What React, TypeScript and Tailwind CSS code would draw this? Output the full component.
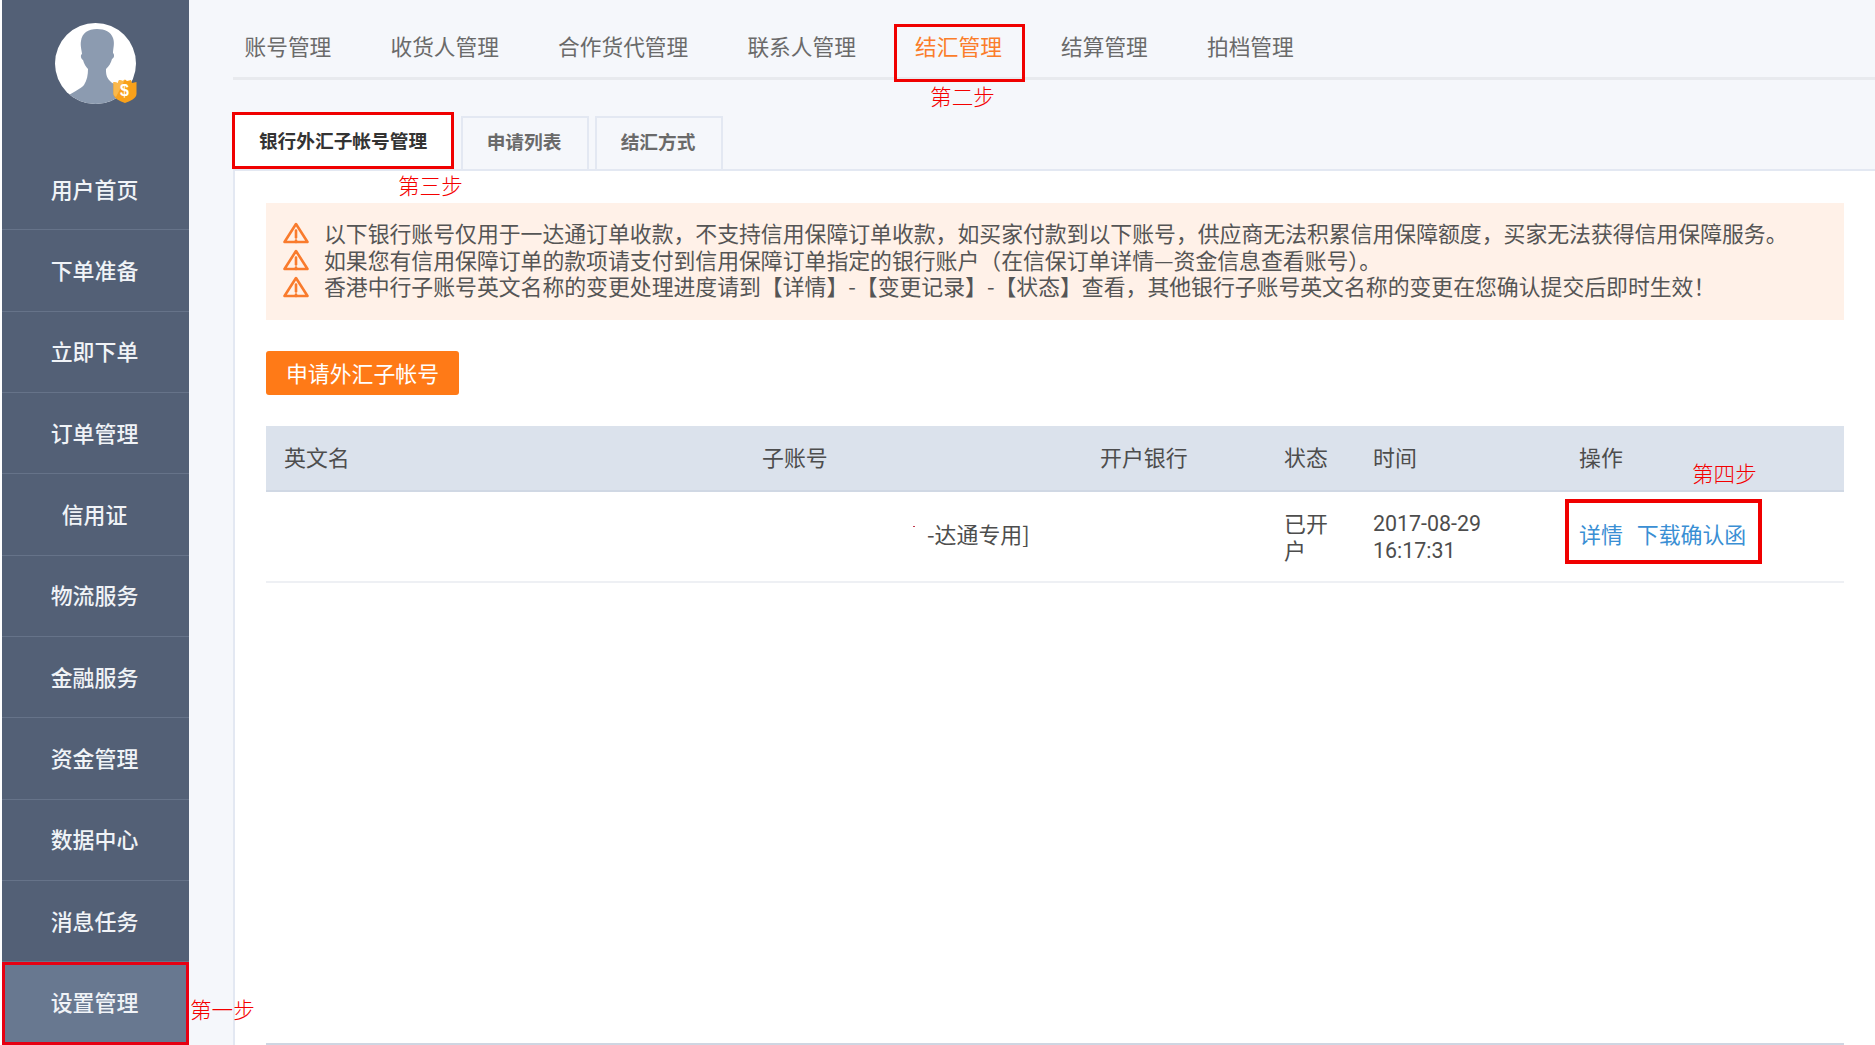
const menu = ["用户首页","下单准备","立即下单","订单管理","信用证","物流服务","金融服务","资金管理","数据中心","消息任务"];
const nav = ["账号管理","收货人管理","合作货代管理","联系人管理","结汇管理","结算管理","拍档管理"];
const notices = [
  "以下银行账号仅用于一达通订单收款，不支持信用保障订单收款，如买家付款到以下账号，供应商无法积累信用保障额度，买家无法获得信用保障服务。",
  "如果您有信用保障订单的款项请支付到信用保障订单指定的银行账户（在信保订单详情—资金信息查看账号）。",
  "香港中行子账号英文名称的变更处理进度请到【详情】-【变更记录】-【状态】查看，其他银行子账号英文名称的变更在您确认提交后即时生效！",
];

function Avatar() {
  return (
    <div className="relative w-[81px] h-[81px]">
      <svg viewBox="0 0 81 81" className="w-[81px] h-[81px] block">
        <defs>
          <clipPath id="av"><circle cx="40.5" cy="40.5" r="40.5" /></clipPath>
        </defs>
        <circle cx="40.5" cy="40.5" r="40.5" fill="#ffffff" />
        <g clipPath="url(#av)">
          <path d="M42 6C33 6 27 10 26 18C25 23 27 28 27 31C25 32 26 36 28 37C29 41 31 44 33 46C33 52 32 57 29 62C26 66 16 70 8 76L14 81L70 81L80 68C70 64 58 62 55 58C51 54 51 50 51 46C54 43 56 40 57 36C59 35 60 32 58 30C58 26 60 20 58 15C56 9 50 6 42 6Z" fill="#8c9bb0" />
        </g>
      </svg>
      <div className="absolute left-[58px] top-[56px] w-[24px] h-[24px]">
        <svg viewBox="0 0 24 24" className="w-[24px] h-[24px] block">
          <path d="M0.5 3L5 4L6 1L10 2L12 0.5L14 2L18 1L19 4L23.5 3L23.5 15C23.5 19 17 22.5 12 24C7 22.5 0.5 19 0.5 15Z" fill="#f9a11b" />
          <path d="M0.5 3L5 4L6 1L10 2L12 0.5L3 18C1.5 17 0.5 16 0.5 15Z" fill="#fbb84a" />
        </svg>
        <span className="absolute inset-0 flex items-center justify-center text-white text-[16px] font-bold leading-none font-['Liberation_Sans',sans-serif]">$</span>
      </div>
    </div>
  );
}

function Warn() {
  return (
    <svg viewBox="0 0 26 22" className="w-[26px] h-[22px] block shrink-0" fill="none" stroke="#f97b2d" strokeWidth="2.6" strokeLinejoin="round" strokeLinecap="round">
      <path d="M13 2L24.5 20H1.5Z" />
      <path d="M13 8.5V15.5" />
      <path d="M13 18.5V20" />
    </svg>
  );
}

const stepCls = "absolute whitespace-nowrap text-[21.6px] leading-[26px] text-[#f40000] font-light";

export default function App() {
  return (
    <div className="w-[1875px] h-[1045px] flex overflow-hidden bg-white font-['Noto_Sans_CJK_SC','Liberation_Sans',sans-serif]">
      <aside className="ml-[2px] w-[187px] shrink-0 bg-[#536076] flex flex-col">
        <div className="h-[149px] pt-[23px] flex justify-center items-start pr-[1px]">
          <Avatar />
        </div>
        {menu.map((m) => (
          <div key={m} className="h-[81.33px] shrink-0 border-b border-[#667389] flex items-center justify-center pr-[2px] text-[21.9px] font-medium text-[#f0f3f7]">
            {m}
          </div>
        ))}
        <div className="relative flex-1 bg-[#687890] border-[3px] border-[#e60012] flex items-center justify-center text-[21.9px] font-medium text-[#f0f3f7] pb-[2px] pr-[2px]">
          设置管理
        </div>
      </aside>

      <div className="relative flex-1 bg-[#f5f7fb] pl-[44px] flex flex-col min-w-0">
        <span className={`${stepCls} left-[1px] top-[996px] z-10`}>第一步</span>

        <nav className="h-[80px] shrink-0 border-b-[3px] border-[#e8eaee] flex gap-[59.2px] pl-[11.5px] pt-[30px]">
          {nav.map((n) => {
            const active = n === "结汇管理";
            return (
              <div key={n} className={`relative h-[32px] flex items-center text-[21.7px] ${active ? "text-[#fb7d2a]" : "text-[#6a6a6a]"}`}>
                {n}
                {active && (
                  <>
                    <div className="absolute -left-[21px] -right-[23px] -top-[6px] h-[58px] border-[3px] border-[#f00000]" />
                    <span className={`${stepCls} left-[15px] top-[53px]`}>第二步</span>
                  </>
                )}
              </div>
            );
          })}
        </nav>

        <div className="h-[91px] shrink-0 flex items-end gap-[7px] -mb-[2px] relative z-10">
          <div className="relative -ml-[1px] h-[57px] mb-[2px] w-[222px] bg-white border-[3px] border-[#f00000] flex items-center justify-center text-[18.7px] font-bold text-[#333333]">
            银行外汇子帐号管理
            <span className={`${stepCls} left-[163px] top-[57px]`}>第三步</span>
          </div>
          <div className="h-[55px] w-[128px] border-2 border-[#e3e8f2] bg-[#f5f7fb] flex items-center justify-center pb-[4px] pr-[2px] text-[18.7px] font-bold text-[#6a6a6a]">申请列表</div>
          <div className="-ml-[1px] h-[55px] w-[128px] border-2 border-[#e3e8f2] bg-[#f5f7fb] flex items-center justify-center pb-[4px] pr-[2px] text-[18.7px] font-bold text-[#6a6a6a]">结汇方式</div>
        </div>

        <main className="flex-1 min-h-0 bg-white border-l-2 border-t-2 border-[#e3e8f2] pl-[31px] pr-[31px] pt-[32px] flex flex-col">
          <section className="h-[117px] shrink-0 bg-[#fff1e8] pt-[17px] pl-[17px] flex flex-col">
            {notices.map((t) => (
              <div key={t} className="h-[26.7px] leading-[26.7px] flex items-center gap-[15px] whitespace-nowrap text-[21.85px] text-[#555555]">
                <Warn />
                <span>{t}</span>
              </div>
            ))}
          </section>

          <button className="mt-[31px] w-[193px] h-[44px] rounded-[3px] bg-[#ff7a17] text-white text-[21.9px] flex items-center justify-center shrink-0">
            申请外汇子帐号
          </button>

          <table className="mt-[31px] w-full table-fixed border-collapse text-[21.9px] text-[#4d4d4d]">
            <thead>
              <tr className="h-[65px] bg-[#dbe2ec] border-b-2 border-[#d0d8e4] text-left">
                <th className="w-[477px] pl-[18px] pb-[2px] font-normal">英文名</th>
                <th className="w-[338px] pl-[19px] pb-[2px] font-normal">子账号</th>
                <th className="w-[184px] pl-[19px] pb-[2px] font-normal">开户银行</th>
                <th className="w-[89px] pl-[19px] pb-[2px] font-normal">状态</th>
                <th className="w-[206px] pl-[19px] pb-[2px] font-normal">时间</th>
                <th className="relative pl-[19px] pb-[2px] font-normal">
                  操作
                  <span className={`${stepCls} left-[132px] top-[34px] text-left`}>第四步</span>
                </th>
              </tr>
            </thead>
            <tbody>
              <tr className="h-[91px] border-b-2 border-[#eef0f4]">
                <td></td>
                <td className="relative pl-[184px] pb-[4px]">
                  -达通专用]
                  <span className="absolute left-[170px] top-[34px] w-[2px] h-[1px] bg-[#c0394d]" />
                </td>
                <td></td>
                <td className="pl-[19px] pr-[16px] pb-[1px] leading-[27px]">已开户</td>
                <td className="pl-[19px] leading-[27px] font-['Roboto',sans-serif] text-[21.4px]">2017-08-29<br />16:17:31</td>
                <td className="pl-[5px]">
                  <div className="w-[197px] h-[65px] mb-[10px] border-[4px] border-[#f00000] flex items-center pl-[10px] pt-[6px] gap-[14px] text-[#3a8fd4] whitespace-nowrap">
                    <span>详情</span>
                    <span>下载确认函</span>
                  </div>
                </td>
              </tr>
            </tbody>
          </table>

          <div className="mt-auto h-[2px] shrink-0 bg-[#cfd6e2]" />
        </main>
      </div>
    </div>
  );
}
